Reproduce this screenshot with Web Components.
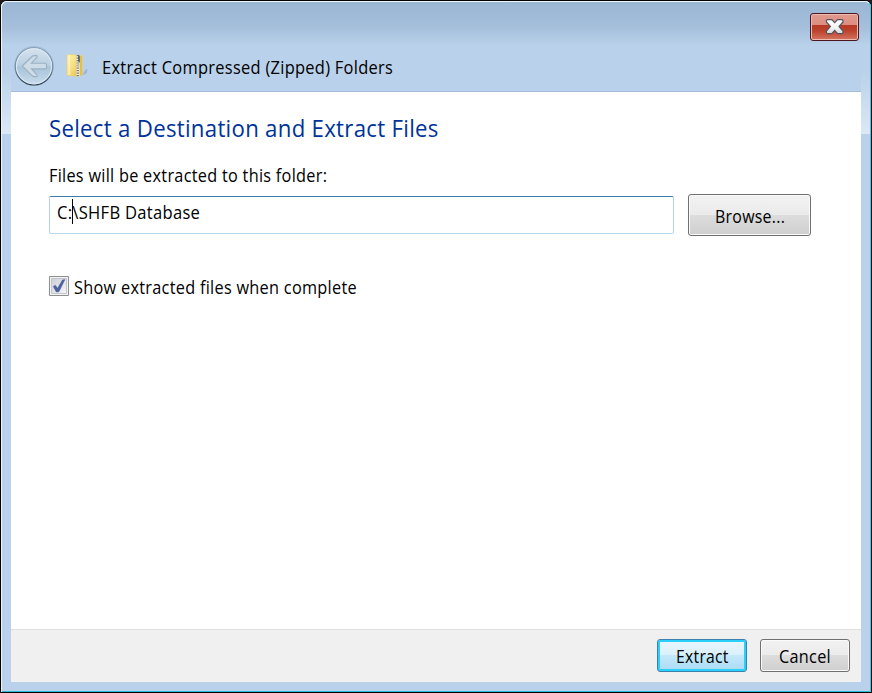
<!DOCTYPE html>
<html lang="en"><head><meta charset="utf-8"><title>Extract Compressed (Zipped) Folders</title>
<style>html,body{margin:0;width:872px;height:693px;overflow:hidden;background:#1d1b20;font-family:"Open Sans","Noto Sans",sans-serif}</style></head>
<body><wizard-window></wizard-window>
<script>
// One line of text, condensed horizontally to the requested width.
class FitText extends HTMLElement{
  connectedCallback(){
    const r=this.attachShadow({mode:'open'});
    r.innerHTML='<style>:host{display:block;white-space:nowrap;width:var(--w);overflow:visible;letter-spacing:.3px;font-weight:370}span{display:inline-block;transform-origin:0 50%}</style><span><slot></slot></span>';
    this.style.setProperty('--w',this.getAttribute('width')+'px');
    const s=r.querySelector('span');
    s.style.transform=`scaleX(${this.getAttribute('width')/s.offsetWidth})`;
  }
}
class AeroButton extends HTMLElement{
  connectedCallback(){
    this.attachShadow({mode:'open'}).innerHTML=`<style>
    :host{display:block;height:33px}
    button{box-sizing:border-box;width:100%;height:100%;padding:var(--drop,0) 0 0;border:1px solid #707070;border-radius:3px;display:flex;align-items:center;justify-content:center;font:17.5px/24px "Open Sans","Noto Sans",sans-serif;color:#000;
      background:linear-gradient(#f2f2f2 0,#ebebeb 49%,#dddddd 50%,#cfcfcf 100%);box-shadow:inset 0 0 0 1px #fafafa}
    :host([primary]) button{border-color:#3c7fb1;background:linear-gradient(#eaf6fd 0,#d9f0fc 49%,#c4e8fa 50%,#a9dbf5 100%);box-shadow:inset 0 0 0 2px #2ad0fa}
    </style><button><slot></slot></button>`;
  }
}
class CloseButton extends HTMLElement{
  connectedCallback(){
    this.attachShadow({mode:'open'}).innerHTML=`<style>
    :host{display:block;width:49px;height:28px}
    button{box-sizing:border-box;width:49px;height:28px;padding:0;border:1px solid #4d1521;border-radius:3px;display:block;background:linear-gradient(#e19a8e 0,#dc8d80 43%,#b63a25 44%,#bc432d 65%,#d47460 100%);box-shadow:inset 0 0 0 1px #eebbb0}
    svg{display:block;margin:0 auto}</style><button aria-label="Close"><svg width="47" height="26" viewBox="0 0 47 26"><defs><linearGradient id="g" x2="0" y2="1"><stop stop-color="#fff"/><stop offset=".55" stop-color="#f5f5f5"/><stop offset="1" stop-color="#d4d6d9"/></linearGradient></defs>
    <path d="M16.2 5.6h4.6l2.9 3.1 2.9-3.1h4.6l.8 1V8L28 12.5l4 4.7v1.4l-.8 1h-4.6l-2.9-3.2-2.9 3.2h-4.6l-.8-1v-1.4l4-4.7-4-4.5V6.6z" fill="url(#g)" stroke="#54555f" stroke-width="1.2"/></svg></button>`;
  }
}
class NavBack extends HTMLElement{
  connectedCallback(){
    this.attachShadow({mode:'open'}).innerHTML=`<style>:host,svg{display:block;width:42px;height:42px}</style>
    <svg viewBox="0 0 42 42"><defs><linearGradient id="b" x2="0" y2="1"><stop stop-color="#d5e3ee"/><stop offset=".48" stop-color="#b9cfe2"/><stop offset=".52" stop-color="#a9c3da"/><stop offset="1" stop-color="#c9dded"/></linearGradient><linearGradient id="r" x2="0" y2="1"><stop stop-color="#8ba2b8"/><stop offset=".55" stop-color="#768da3"/><stop offset="1" stop-color="#2d3f50"/></linearGradient></defs>
    <circle cx="21" cy="21" r="19.9" fill="#a3bdd5"/><circle cx="21" cy="21.3" r="18.7" fill="url(#b)" stroke="url(#r)" stroke-width="1.2"/><circle cx="21" cy="21.2" r="17.5" fill="none" stroke="#dbe9f4" stroke-width="1.1"/>
    <path d="M9.3 21 19 11.5q1-.9 2.2-.9h2.4q1.3.4.3 1.7L18.4 18.2H32q1.5 0 1.5 1.3v3q0 1.4-1.5 1.4H18.4l5.5 6q.9 1.2-.3 1.7h-2.4q-1.3 0-2.2-1z" fill="#cddce7" stroke="#9bb1c3" stroke-width="1.1"/></svg>`;
  }
}
class ZipIcon extends HTMLElement{
  connectedCallback(){
    this.attachShadow({mode:'open'}).innerHTML=`<style>:host,svg{display:block;width:24px;height:26px}</style>
    <svg viewBox="0 0 24 26"><defs><linearGradient id="f" x2="1" y2="1"><stop stop-color="#fff4b4"/><stop offset=".5" stop-color="#f9e184"/><stop offset="1" stop-color="#e9c24e"/></linearGradient></defs>
    <path d="M16 22.5 20 16l1.5 1-1 3.5-4.5 2z" fill="#8aa4c3" opacity=".6"/>
    <path d="M1 2.2 2.2 1.5l9 .4v21.5L1 22.2z" fill="url(#f)" stroke="#e9cf73" stroke-width=".6"/><path d="M3.2 3v19" stroke="#fff7cb"/>
    <path d="m10.5 3 5-1 1 .8v19l-6 2z" fill="#f3da7a"/><path d="m13.5 3 2.8-.6v19.3l-2.8 1.9z" fill="#e3c04e"/>
    <path d="M12 2v21.5" stroke="#fafafa" stroke-width="2.6"/><path d="M11.8 2v21.5" stroke="#737986" stroke-width="2.4" stroke-dasharray="1.3 1.2"/><path d="M13 2.5v7" stroke="#414b5b" stroke-width="1.5"/><path d="M12.1 8.5v5" stroke="#b4bcc8" stroke-width="1.8"/></svg>`;
  }
}
class PathField extends HTMLElement{
  connectedCallback(){
    this.attachShadow({mode:'open'}).innerHTML=`<style>
    :host{box-sizing:border-box;display:block;position:relative;width:625px;height:38px;border:1px solid #b5cfe7;border-top-color:#3d7bad;border-bottom-color:#b7d9ed;border-radius:2px;background:#fff;padding:3px 0 0 7px;font-size:17.5px;line-height:24px}
    i{position:absolute;left:22px;top:2px;width:1px;height:25px;background:#000}</style><slot></slot><i></i>`;
  }
}
class CheckOption extends HTMLElement{
  connectedCallback(){
    this.attachShadow({mode:'open'}).innerHTML=`<style>
    :host{display:flex;align-items:flex-start;gap:5px;height:24px;font-size:17.5px;line-height:24px}svg{display:block;margin-top:1px}</style>
    <svg width="20" height="20" viewBox="0 0 20 20"><defs><linearGradient id="c" x2="1" y2="1"><stop stop-color="#cbcfd5"/><stop offset="1" stop-color="#f6f6f6"/></linearGradient></defs><path d="M.5.5h19v19H.5z" fill="#f4f4f4" stroke="#8e8f8f"/><path d="M2.5 2.5h15v15h-15z" fill="url(#c)" stroke="#c3c7cd"/><path d="m4.3 10.4 2-1.2 2.3 3L13.4 4l2.5-.4-6 12.2-2.6.2z" fill="#4b60a0" stroke="#4b60a0" stroke-width=".5"/></svg><slot></slot>`;
  }
}
class WizardWindow extends HTMLElement{
  connectedCallback(){
    this.attachShadow({mode:'open'}).innerHTML=`<style>
    :host{box-sizing:border-box;display:block;width:872px;height:693px;border:1px solid #000;border-radius:7px 7px 0 0;background:#fff}
    .frame{box-sizing:border-box;width:870px;height:691px;border:1px solid #e9f6fc;border-right-color:#32cbea;border-bottom-color:#27bddf;border-radius:6px 6px 0 0;padding:0 9px 9px;
      background:linear-gradient(#b9d1ea00 0,#dce8f5 100%) 0 68px/100% 64px no-repeat,linear-gradient(#9bb6d2 0,#a1bcd8 18px,#a7c1dd 27px,#b9d1ea 43px,#b9d1ea 100%)}
    header{height:90px;box-sizing:border-box;background:linear-gradient(#b9d1ea00 0 60px,#b9d1ea 61px);border-bottom:1px solid #a3bcd7;display:flex;flex-direction:column}
    .top{height:43px;padding:11px 2px 0;box-sizing:border-box;display:flex;justify-content:flex-end}
    .title{display:flex;height:46px;align-items:flex-start;padding-left:2px}
    zip-icon{margin:8px 0 0 11px}.title fit-text{font-size:17.5px;line-height:24px;margin:10px 0 0 12px}
    main{height:537px;box-sizing:border-box;padding:21px 38px;background:#fff}
    .heading{font-size:23px;line-height:30px;color:#039}
    .label{font-size:17.5px;line-height:24px;margin-top:20px}
    .row{display:flex;gap:14px;height:42px;margin-top:7px;align-items:flex-start}.row path-field{margin-top:2px}
    .browse{width:123px;height:42px;--drop:1px}check-option{margin-top:39px}
    footer{height:53px;box-sizing:border-box;border-top:1px solid #dfdfdf;background:#f0f0f0;padding:9px 11px 0;display:flex;justify-content:flex-end;gap:13px}
    footer aero-button{width:90px}
    </style><div class="frame"><header><div class="top"><close-button></close-button></div><div class="title"><nav-back></nav-back><zip-icon></zip-icon><fit-text width="291">Extract Compressed (Zipped) Folders</fit-text></div></header>
    <main><fit-text class="heading" width="390">Select a Destination and Extract Files</fit-text><fit-text class="label" width="278">Files will be extracted to this folder:</fit-text>
    <div class="row"><path-field><fit-text width="143">C:\\SHFB Database</fit-text></path-field><aero-button class="browse"><fit-text width="70">Browse...</fit-text></aero-button></div>
    <check-option><fit-text width="283">Show extracted files when complete</fit-text></check-option></main>
    <footer><aero-button primary><fit-text width="53">Extract</fit-text></aero-button><aero-button><fit-text width="52">Cancel</fit-text></aero-button></footer></div>`;
  }
}
customElements.define('fit-text',FitText);customElements.define('aero-button',AeroButton);customElements.define('close-button',CloseButton);customElements.define('nav-back',NavBack);customElements.define('zip-icon',ZipIcon);customElements.define('path-field',PathField);customElements.define('check-option',CheckOption);customElements.define('wizard-window',WizardWindow);
</script></body></html>
